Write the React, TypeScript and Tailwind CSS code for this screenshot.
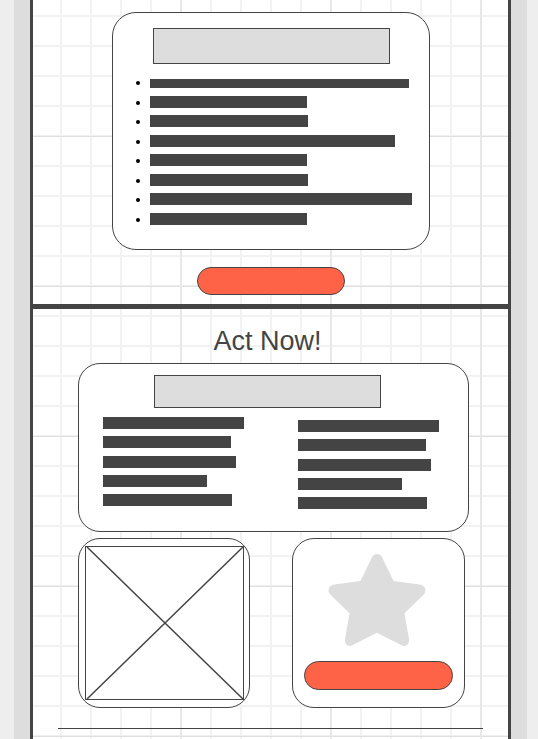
const featureWidths = [
  'w-[259px]',
  'w-[157px]',
  'w-[158px]',
  'w-[245px]',
  'w-[157px]',
  'w-[158px]',
  'w-[262px]',
  'w-[157px]',
];

const columnWidths = ['w-[141px]', 'w-[128px]', 'w-[133px]', 'w-[104px]', 'w-[129px]'];

function FeatureCard() {
  return (
    <div className="rounded-3xl border border-[#444] bg-white pt-[15px] pb-6">
      <div className="mr-[39px] ml-10 h-9 border border-[#444] bg-[#ddd]" />
      <ul className="mt-3 flex h-[149px] flex-col justify-between pr-4 pl-[23px]">
        {featureWidths.map((width, i) => (
          <li key={i} className="flex h-3 items-end gap-[10px]">
            <span className="mb-[3px] size-1 shrink-0 rounded-full bg-black" />
            <span className={`${i === 0 ? 'h-[9px]' : 'h-3'} ${width} bg-[#444]`} />
          </li>
        ))}
      </ul>
    </div>
  );
}

function TextColumn() {
  return (
    <div className="flex h-[89px] flex-col justify-between">
      {columnWidths.map((width, i) => (
        <div key={i} className={`h-3 max-w-full ${width} bg-[#444]`} />
      ))}
    </div>
  );
}

function Star() {
  return (
    <svg viewBox="0 0 96 92" className="mr-1 h-[92px] w-24 overflow-visible fill-[#ddd]" aria-hidden="true">
      <path d="M31.5 27 L42.7 3.7 C45 -1.2 51 -1.2 53.3 3.7 L64.5 27 L90.7 30.4 C96.3 31.2 98.2 36.8 94.7 40.5 L75.5 59.3 L79.9 84.5 C81 90 76.8 93.4 72.6 91.3 L48 78.8 L23.4 91.3 C19.2 93.4 15 90 16.1 84.5 L20.5 59.3 L1.3 40.5 C-2.2 36.8 -0.3 31.2 5.3 30.4 Z" />
    </svg>
  );
}

export default function App() {
  return (
    <div className="min-h-screen bg-[#eee] pr-[11px] pl-[14px] font-['Liberation_Sans',Arial,sans-serif] text-[#444]">
      <div className="bg-[#ddd] px-4">
        <main className="min-h-screen border-x-[3px] border-[#444] bg-white bg-[linear-gradient(to_right,#e8e8e8_2px,transparent_2px),linear-gradient(to_bottom,#f0f0f0_1px,#dfdfdf_1px,#dfdfdf_2px,transparent_2px),linear-gradient(to_right,#f2f2f2_2px,transparent_2px),linear-gradient(to_bottom,#f2f2f2_2px,transparent_2px)] bg-[size:150px_150px,150px_150px,30px_30px,30px_30px] bg-[position:147px_0px,0px_135px,27px_0px,0px_15px]">
          <section className="border-b-[5px] border-[#444] pt-3 pr-[78px] pb-[9px] pl-[79px]">
            <FeatureCard />
            <button
              type="button"
              aria-label="Learn more"
              className="mx-auto mt-[17px] block h-7 w-[148px] rounded-full border border-[#444] bg-[#ff6347]"
            />
          </section>

          <section className="pt-4 pb-[10px]">
            <h1 className="pr-[6px] text-center text-[27px] leading-8 [font-kerning:none]">Act Now!</h1>
            <div className="mt-[6px] mr-[39px] ml-[45px]">
              <div className="h-[169px] rounded-[22px] border border-[#444] bg-white pt-[11px]">
                <div className="mr-[87px] ml-[75px] h-[33px] border border-[#444] bg-[#ddd]" />
                <div className="grid grid-cols-2 gap-[49px] px-6 pt-[9px]">
                  <TextColumn />
                  <div className="pt-[3px]">
                    <TextColumn />
                  </div>
                </div>
              </div>

              <div className="mt-[6px] mr-1 grid grid-cols-[172fr_173fr] gap-[42px]">
                <div className="h-[170px] rounded-[22px] border border-[#444] bg-white pt-[7px] pr-[5px] pb-[7px] pl-[6px]">
                  <svg
                    viewBox="0 0 159 154"
                    preserveAspectRatio="none"
                    className="h-full w-full border border-[#444] stroke-[#444]"
                    role="img"
                    aria-label="Image placeholder"
                  >
                    <path d="M1 0 L159 154 M159 0 L1 154" strokeWidth="1.5" />
                  </svg>
                </div>
                <div className="flex h-[170px] flex-col items-center rounded-[22px] border border-[#444] bg-white px-[11px] pt-[15px]">
                  <Star />
                  <button
                    type="button"
                    aria-label="Act now"
                    className="mt-[15px] h-[29px] w-full rounded-full border border-[#444] bg-[#ff6347]"
                  />
                </div>
              </div>
            </div>
            <hr className="mx-[25px] mt-5 border-t border-[#444]" />
          </section>
        </main>
      </div>
    </div>
  );
}
